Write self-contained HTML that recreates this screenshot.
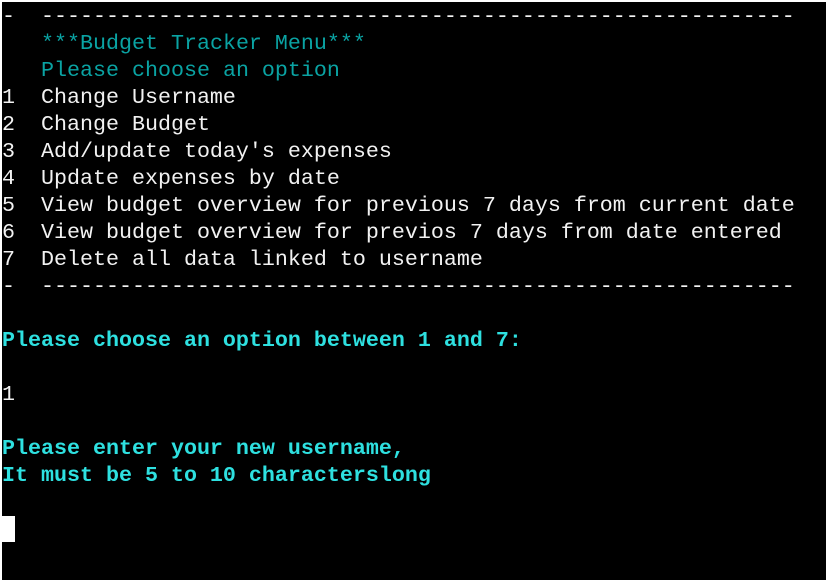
<!DOCTYPE html>
<html><head><style>
html,body{margin:0;padding:0;background:#fff;}
#t{position:absolute;left:2px;top:2px;width:824px;height:578px;background:#000;overflow:hidden;}
pre{margin:0;padding-top:1px;font-family:"Liberation Mono","Courier New",monospace;font-size:21.67px;line-height:27px;color:#f2f2f2;white-space:pre;}
.d{color:#0aa3a3}
.b{color:#2ee0e0;font-weight:bold}
.c{display:inline-block;width:13px;height:26px;background:#fff;vertical-align:top;}
</style></head><body><div id="t"><pre>-  ----------------------------------------------------------
   <span class="d">***Budget Tracker Menu***</span>
   <span class="d">Please choose an option</span>
1  Change Username
2  Change Budget
3  Add/update today's expenses
4  Update expenses by date
5  View budget overview for previous 7 days from current date
6  View budget overview for previos 7 days from date entered
7  Delete all data linked to username
-  ----------------------------------------------------------

<span class="b">Please choose an option between 1 and 7:</span>

1

<span class="b">Please enter your new username,</span>
<span class="b">It must be 5 to 10 characterslong</span>

<span class="c"></span></pre></div></body></html>
